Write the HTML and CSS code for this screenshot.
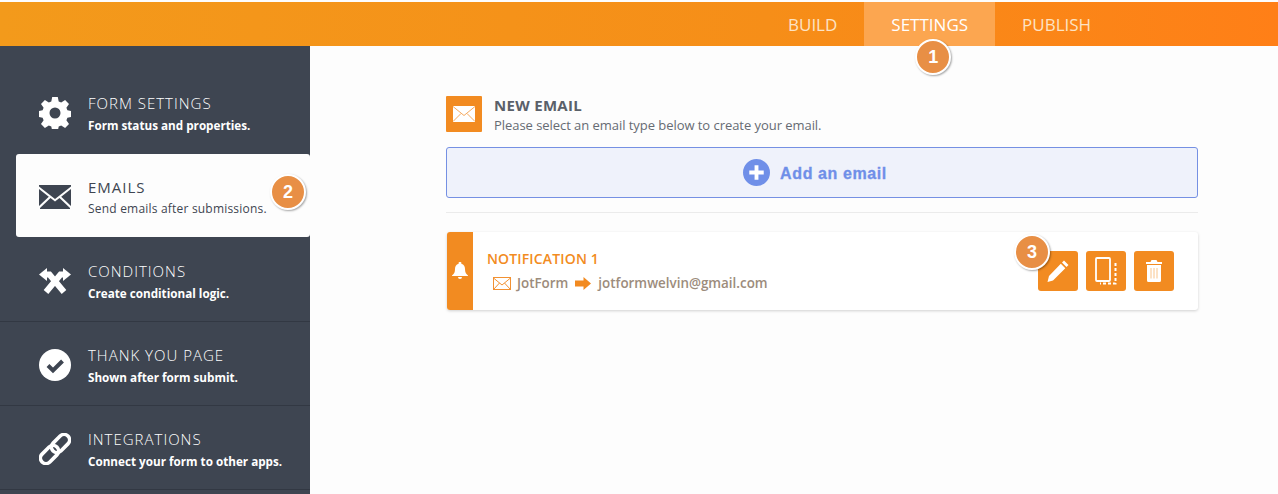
FILE: index.html
```html
<!DOCTYPE html>
<html lang="en">
<head>
  <meta charset="UTF-8">
  <title>Form Emails</title>
  <link rel="stylesheet" href="styles.css">
</head>
<body>
  <header class="topbar">
    <nav class="tabs">
      <a class="tab">BUILD</a>
      <a class="tab active">SETTINGS<span class="badge badge-1">1</span></a>
      <a class="tab">PUBLISH</a>
    </nav>
  </header>

  <div class="main">
    <aside class="sidebar">
      <div class="side-item no-line">
        <svg class="side-icon" viewBox="0 0 32 32"><path fill="#fff" fill-rule="evenodd" d="M13.2 0h5.600l.9 4.600 2.500 1 3.900-2.600 3.900 3.900-2.600 3.900 1 2.500 4.600.9v5.600l-4.600.9-1 2.500 2.600 3.900-3.900 3.900-3.900-2.600-2.500 1-.9 4.600h-5.600l-.9-4.600-2.500-1-3.900 2.600-3.900-3.900 2.600-3.900-1-2.500-4.600-.9v-5.600l4.600-.9 1-2.500-2.600-3.900 3.900-3.900 3.900 2.600 2.500-1zM16 10.500a5.500 5.500 0 1 0 0 11 5.500 5.500 0 0 0 0-11z"/></svg>
        <div class="side-text">
          <div class="side-title">FORM SETTINGS</div>
          <div class="side-desc">Form status and properties.</div>
        </div>
      </div>
      <div class="side-item selected">
        <svg class="side-icon mail" viewBox="0 0 32 24"><path fill="#3e4551" d="M0 1.500 16 14 32 1.500V0H0zM0 4v17l9.800-9.300zM32 4v17l-9.800-9.300zM11.500 13 1 23v1h30v-1L20.500 13 16 16.500z"/></svg>
        <div class="side-text">
          <div class="side-title">EMAILS</div>
          <div class="side-desc">Send emails after submissions.</div>
        </div>
        <span class="badge badge-2">2</span>
      </div>
      <div class="side-item">
        <svg class="side-icon" viewBox="0 0 32 32"><path fill="#fff" d="M0 9.500 8 3v13z"/><path fill="#fff" d="M32 9.500 24 3v13z"/><path fill="none" stroke="#fff" stroke-width="6" d="M7 9.500h3.500L25 27M25 9.500h-3.500L7 27"/></svg>
        <div class="side-text">
          <div class="side-title">CONDITIONS</div>
          <div class="side-desc">Create conditional logic.</div>
        </div>
      </div>
      <div class="side-item">
        <svg class="side-icon" viewBox="0 0 32 32"><circle cx="16" cy="16" r="16" fill="#fff"/><path fill="none" stroke="#3e4551" stroke-width="4" d="m9 16.500 5 5 9.500-9.500"/></svg>
        <div class="side-text">
          <div class="side-title">THANK YOU PAGE</div>
          <div class="side-desc">Shown after form submit.</div>
        </div>
      </div>
      <div class="side-item">
        <svg class="side-icon" viewBox="0 0 32 32"><g fill="none" stroke="#fff" stroke-width="3.600"><rect x="16" y="0" width="11" height="21" rx="5.500" transform="rotate(45 21.500 10.500)"/><rect x="5" y="11" width="11" height="21" rx="5.500" transform="rotate(45 10.500 21.500)"/></g></svg>
        <div class="side-text">
          <div class="side-title">INTEGRATIONS</div>
          <div class="side-desc">Connect your form to other apps.</div>
        </div>
      </div>
    </aside>

    <section class="content">
      <div class="new-head">
        <div class="head-icon">
          <svg viewBox="0 0 22 16" width="22" height="16"><rect width="22" height="16" fill="#fff"/><path fill="none" stroke="#f5a95f" d="m0 .5 11 9 11-9M0 15.500l8-8M22 15.500l-8-8"/></svg>
        </div>
        <div>
          <div class="head-title">NEW EMAIL</div>
          <div class="head-desc">Please select an email type below to create your email.</div>
        </div>
      </div>

      <div class="add-btn">
        <svg viewBox="0 0 28 28" width="27" height="27"><circle cx="14" cy="14" r="14" fill="#6f8fe8"/><path stroke="#fff" stroke-width="4" d="M14 6.500v15M6.500 14h15"/></svg>
        <span class="add-label">Add an email</span>
      </div>

      <div class="divider"></div>

      <div class="card">
        <div class="card-strip">
          <svg viewBox="0 0 16 18" width="16" height="18"><path fill="#fff" d="M8 0a1.300 1.300 0 0 1 1.300 1.700C12 2.300 13 4.500 13 7c0 3.500 1 5 3 6.500v.5H0v-.5C2 12 3 10.500 3 7c0-2.500 1-4.700 3.700-5.300A1.300 1.300 0 0 1 8 0zM6 15h4a2 2 0 0 1-4 0z"/></svg>
        </div>
        <div class="card-body">
          <div class="card-title">NOTIFICATION 1</div>
          <div class="card-line">
            <svg viewBox="0 0 18 13" width="18" height="13"><rect x=".5" y=".5" width="17" height="12" fill="none" stroke="#f29132"/><path fill="none" stroke="#f29132" d="m.5 1 8.500 7 8.500-7M.5 12.500l6-6.500M17.500 12.500l-6-6.500"/></svg>
            <span class="from">JotForm</span>
            <svg class="arrow" viewBox="0 0 16 13" width="16" height="13"><path fill="#f28a20" d="M0 3.500h8.500V0L16 6.500 8.500 13V9.500H0z"/></svg>
            <span>jotformwelvin@gmail.com</span>
          </div>
        </div>
        <div class="card-actions">
          <span class="badge badge-3">3</span>
          <div class="act">
            <svg viewBox="0 0 22 22" width="22" height="22"><path fill="#fff" d="M17 .5 21.500 5l-2 2L15 2.500zM13.800 3.700l4.500 4.500L6 20.500l-5.500 1.500L2 16z"/></svg>
          </div>
          <div class="act">
            <svg viewBox="0 0 22 28" width="22" height="28"><rect x="1" y="1" width="14" height="23" rx="1" fill="none" stroke="#fff" stroke-width="1.800"/><path fill="none" stroke="#fff" stroke-width="2" stroke-dasharray="3 2" d="M20.500 6v20.500H5"/></svg>
          </div>
          <div class="act">
            <svg viewBox="0 0 16 22" width="16" height="22"><path fill="#fff" d="M5.500 0h5l1 2H16v2H0V2h4.500zM1 5h14v15.500a1.500 1.500 0 0 1-1.500 1.500h-11A1.500 1.500 0 0 1 1 20.500z"/><path stroke="#f9c58c" stroke-width="1" d="M5 8v10.500M8 8v10.500M11 8v10.500"/></svg>
          </div>
        </div>
      </div>
    </section>
  </div>
</body>
</html>
```

FILE: styles.css
```css
* { margin: 0; padding: 0; box-sizing: border-box; }
html, body { width: 100%; height: 100%; overflow: hidden; }
body { display: flex; flex-direction: column; background: #fdfdfd; font-family: "Open Sans", "Noto Sans", sans-serif; padding-top: 2px; }

.topbar { height: 44px; flex: none; display: flex; padding-left: 761px; background: linear-gradient(90deg, #f39a1b 0%, #f68e18 60%, #ff7f17 100%); }
.tabs { display: flex; }
.tab { position: relative; display: flex; align-items: center; padding: 0 27px; font-size: 17px; color: #fde3c4; }
.tab.active { background: #fca650; color: #fff; }

.badge { position: absolute; width: 36px; height: 36px; border-radius: 50%; background: #e88f45; border: 2px solid #fff; box-shadow: 1px 1px 2px rgba(0,0,0,.35); color: #fff; font: bold 18px "Liberation Sans", sans-serif; display: flex; align-items: center; justify-content: center; }
.badge-1 { left: 51px; top: 37px; }
.badge-2 { left: 254px; top: 20px; }
.badge-3 { left: -24px; top: 2px; }

.main { flex: 1; display: flex; min-height: 0; }

.sidebar { width: 310px; flex: none; background: #3e4551; padding-top: 24px; }
.side-item { position: relative; height: 84px; display: flex; align-items: center; padding: 2px 0 0 39px; border-bottom: 1px solid #323843; color: #fff; }
.side-item.no-line { border-bottom-color: transparent; }
.side-item.selected { margin-left: 16px; padding-left: 23px; background: #fdfdfd; border-radius: 3px; color: #3e4551; height: 83px; margin-bottom: 1px; border: 0; }
.side-icon { width: 32px; height: 32px; flex: none; margin-right: 17px; }
.side-icon.mail { height: 24px; }
.side-text { padding-top: 2px; }
.side-title { font-size: 15px; font-weight: 300; letter-spacing: 1px; line-height: 19px; color: #fff; }
.selected .side-title { font-weight: 400; color: #3e4551; }
.side-desc { font-size: 11.7px; font-weight: 700; line-height: 16px; margin-top: 4px; }
.selected .side-desc { font-size: 12px; font-weight: 400; letter-spacing: .2px; }

.content { flex: 1; padding: 50px 80px 0 136px; }
.new-head { display: flex; align-items: flex-start; gap: 12px; height: 36px; margin-bottom: 15px; }
.head-icon { width: 36px; height: 36px; background: #f28b21; border-radius: 1px; display: flex; align-items: center; justify-content: center; }
.head-title { font-size: 15px; font-weight: 700; color: #5a6069; line-height: 19px; letter-spacing: .3px; }
.head-desc { font-size: 13px; color: #666b73; line-height: 18px; margin-top: 1px; letter-spacing: -.05px; }

.add-btn { height: 51px; background: #eff2fb; border: 1px solid #7590e3; border-radius: 3px; display: flex; align-items: center; justify-content: center; gap: 10px; padding-right: 14px; font: bold 16px "Liberation Sans", sans-serif; color: #6f8fe8; letter-spacing: .6px; }
.add-label { padding-top: 2px; -webkit-text-stroke: .3px #6f8fe8; }
.divider { height: 1px; background: #ebebeb; margin: 14px 0 19px; }

.card { margin-left: 1px; height: 78px; display: flex; background: #fff; border-radius: 3px; box-shadow: 0 1px 3px rgba(0,0,0,.18); }
.card-strip { width: 26px; flex: none; background: #f28b21; border-radius: 3px 0 0 3px; display: flex; align-items: center; justify-content: center; }
.card-body { flex: 1; padding: 17px 0 0 14px; }
.card-title { font-size: 14px; font-weight: 600; color: #f28b21; line-height: 19px; letter-spacing: .15px; }
.card-line { display: flex; align-items: center; margin-top: 6px; padding-left: 6px; font-size: 13.4px; font-weight: 600; color: #9c8c7c; line-height: 18px; }
.from { margin-left: 6px; }
.arrow { margin: 0 7px; }
.card-actions { position: relative; display: flex; gap: 8px; padding: 19px 24px 0 0; }
.act { width: 40px; height: 40px; background: #f28b21; border-radius: 3px; display: flex; align-items: center; justify-content: center; }
```
